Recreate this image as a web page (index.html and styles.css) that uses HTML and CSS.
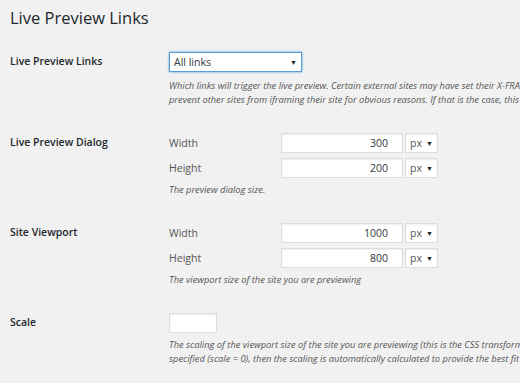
FILE: index.html
```html
<!DOCTYPE html>
<html lang="en">
<head>
    <meta charset="UTF-8">
    <meta name="viewport" content="width=device-width, initial-scale=1.0">
    <title>Live Preview Links</title>
    <link rel="stylesheet" href="styles.css">
</head>
<body>
    <div class="wrap">
        <h1>Live Preview Links</h1>

        <div class="form-row">
            <div class="row-label">Live Preview Links</div>
            <div class="row-field">
                <span class="select-box select-wide">
                    <select class="focused">
                        <option>All links</option>
                        <option>Only external links</option>
                        <option>Only internal links</option>
                    </select>
                </span>
                <p class="description">Which links will trigger the live preview. Certain external sites may have set their X-FRAME-OPTIONS header to<br>prevent other sites from iframing their site for obvious reasons. If that is the case, this site will not show up.</p>
            </div>
        </div>

        <div class="form-row">
            <div class="row-label">Live Preview Dialog</div>
            <div class="row-field">
                <div class="size-row">
                    <label class="size-label">Width</label>
                    <input type="text" class="size-input" value="300">
                    <span class="select-box select-unit">
                        <select><option>px</option><option>%</option></select>
                    </span>
                </div>
                <div class="size-row">
                    <label class="size-label">Height</label>
                    <input type="text" class="size-input" value="200">
                    <span class="select-box select-unit">
                        <select><option>px</option><option>%</option></select>
                    </span>
                </div>
                <p class="description">The preview dialog size.</p>
            </div>
        </div>

        <div class="form-row">
            <div class="row-label">Site Viewport</div>
            <div class="row-field">
                <div class="size-row">
                    <label class="size-label">Width</label>
                    <input type="text" class="size-input" value="1000">
                    <span class="select-box select-unit">
                        <select><option>px</option><option>%</option></select>
                    </span>
                </div>
                <div class="size-row">
                    <label class="size-label">Height</label>
                    <input type="text" class="size-input" value="800">
                    <span class="select-box select-unit">
                        <select><option>px</option><option>%</option></select>
                    </span>
                </div>
                <p class="description">The viewport size of the site you are previewing</p>
            </div>
        </div>

        <div class="form-row">
            <div class="row-label">Scale</div>
            <div class="row-field">
                <input type="text" class="scale-input" value="">
                <p class="description">The scaling of the viewport size of the site you are previewing (this is the CSS transform scale). If no scale is<br>specified (scale = 0), then the scaling is automatically calculated to provide the best fit to the dialog.</p>
            </div>
        </div>
    </div>
</body>
</html>
```

FILE: styles.css
```css
/* Settings page, scaled-down admin look */
body {
    margin: 0;
    background-color: #f1f1f1;
    font-family: "Open Sans", "Liberation Sans", sans-serif;
    color: #23282d;
    overflow: hidden;
}

.wrap {
    padding-left: 10px;
}

h1 {
    font-size: 16.5px;
    font-weight: 400;
    line-height: 22px;
    margin: 7px 0 10px 0;
}

.form-row {
    display: flex;
    padding: 13px 0;
}

.row-label {
    width: 159px;
    flex-shrink: 0;
    font-size: 10.5px;
    font-weight: 600;
    line-height: 14px;
    padding-top: 2px;
}

.row-field {
    flex: 1;
    min-width: 0;
}

.select-box {
    position: relative;
    display: inline-block;
    vertical-align: top;
}

.select-box::after {
    content: "\25BC";
    position: absolute;
    top: 6px;
    right: 5px;
    font-size: 7px;
    color: #222;
    pointer-events: none;
}

select {
    -webkit-appearance: none;
    appearance: none;
    display: block;
    height: 20px;
    margin: 0;
    padding: 0 4px;
    font-family: inherit;
    font-size: 10.5px;
    color: #32373c;
    background-color: #ffffff;
    border: 1px solid #ddd;
    border-radius: 0;
    box-shadow: inset 0 1px 2px rgba(0, 0, 0, 0.07);
}

select.focused {
    border-color: #5b9dd9;
    box-shadow: 0 0 2px rgba(30, 140, 190, 0.8);
}

.select-wide select {
    width: 133px;
}

.select-unit select {
    width: 33px;
    color: #555;
}

.size-row {
    display: flex;
    align-items: center;
    margin-bottom: 5px;
}

.size-label {
    width: 112px;
    font-size: 10.5px;
    color: #555;
}

input {
    box-sizing: border-box;
    height: 20px;
    margin: 0;
    font-family: inherit;
    font-size: 10.5px;
    color: #32373c;
    background-color: #ffffff;
    border: 1px solid #ddd;
    box-shadow: inset 0 1px 2px rgba(0, 0, 0, 0.07);
    outline: none;
}

.size-input {
    width: 122px;
    margin-right: 2px;
    padding: 0 14px 0 4px;
    text-align: right;
}

.scale-input {
    display: block;
    width: 48px;
}

.description {
    margin: 5px 0 0 0;
    font-size: 9.3px;
    font-style: italic;
    line-height: 14px;
    color: #555;
    white-space: nowrap;
}

.size-row + .size-row + .description {
    margin-top: 1px;
}
```
